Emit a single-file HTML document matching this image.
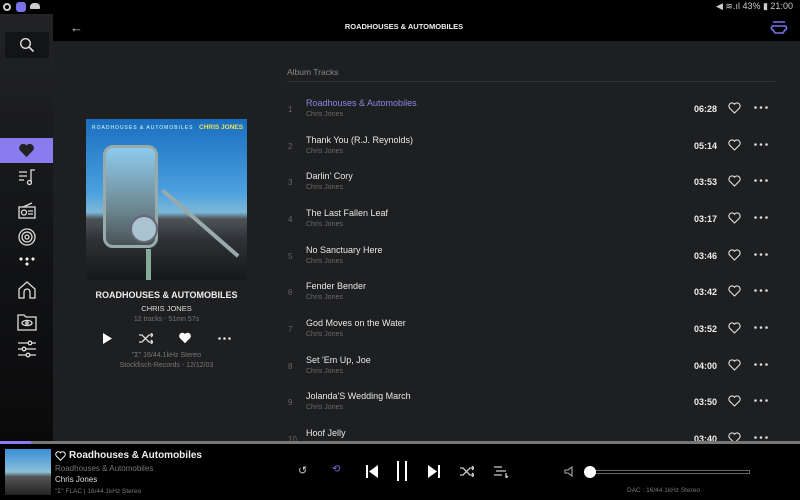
<!DOCTYPE html>
<html><head><meta charset="utf-8"><style>
*{margin:0;padding:0;box-sizing:border-box}
body{width:800px;height:500px;overflow:hidden;background:#1e1f21;font-family:"Liberation Sans",sans-serif;position:relative;color:#fff}
.abs{position:absolute}
.status{left:0;top:0;width:800px;height:14px;background:#000}
.side{left:0;top:14px;width:53px;height:430px;background:linear-gradient(#222325,#111214 60%,#0a0a0b)}
.topbar{left:53px;top:14px;width:747px;height:27px;background:#000}
.row{position:absolute;left:285px;width:490px;height:36px}
.num{position:absolute;left:3px;top:7px;font-size:8px;color:#666}
.tt{position:absolute;left:21px;top:0;font-size:9px;color:#e8e8e8}
.ar{position:absolute;left:21px;top:13px;font-size:7px;color:#6a6a6a}
.tm{position:absolute;left:409px;top:6px;font-size:9px;color:#eee;font-weight:bold}
.hr{position:absolute;left:443px;top:4px}
.dots{position:absolute;left:469px;top:8px}
svg{display:block}
</style></head><body>
<div class="abs status"></div>
<div class="abs" style="left:3px;top:3px;width:8px;height:8px;border-radius:50%;border:2px solid #ccc"></div>
<div class="abs" style="left:16px;top:2px;width:10px;height:10px;border-radius:3px;background:#7a72e8"></div>
<div class="abs" style="left:30px;top:3px;width:10px;height:6px;border-radius:4px 4px 1px 1px;background:#ccc"></div>
<div class="abs" style="left:716px;top:1px;font-size:9px;color:#ccc">◀ ≋.ıl 43% ▮ 21:00</div>
<div class="abs side"></div>
<div class="abs" style="left:5px;top:32px;width:44px;height:26px;background:#131416;border-radius:2px"></div>
<svg class="abs" style="left:19px;top:37px" width="16" height="16" viewBox="0 0 16 16"><circle cx="6.5" cy="6.5" r="4.8" fill="none" stroke="#ddd" stroke-width="1.4"/><path d="M10 10l4.5 4.5" stroke="#ddd" stroke-width="1.6"/></svg>
<div class="abs topbar"></div>
<div class="abs" style="left:70px;top:20px;font-size:13px;color:#ccc">←</div>
<div class="abs" style="left:0;top:22px;width:808px;text-align:center;font-size:7.5px;font-weight:bold;color:#eee">ROADHOUSES &amp; AUTOMOBILES</div>
<svg class="abs" style="left:770px;top:20px" width="18" height="16" viewBox="0 0 18 16"><path d="M3 2h12M4 6h10a2 2 0 0 1 1 4l-2 3H5L3 10a2 2 0 0 1 1-4" fill="none" stroke="#7a72e8" stroke-width="1.6"/></svg>
<div class="abs" style="left:0;top:138px;width:53px;height:25px;background:#8a7cf0"></div>
<svg class="abs" style="left:18px;top:143px" width="17" height="15" viewBox="0 0 17 15"><path d="M8.5 14L2 7.5A3.8 3.8 0 0 1 8.5 2.5A3.8 3.8 0 0 1 15 7.5Z" fill="#222"/></svg>
<svg class="abs" style="left:17px;top:167px" width="20" height="20" viewBox="0 0 20 20" fill="none" stroke="#ddd" stroke-width="1.3"><path d="M2 5h8M2 9h8M2 13h5"/><path d="M14 15V3h4"/><circle cx="12.5" cy="15.5" r="2"/></svg>
<svg class="abs" style="left:17px;top:202px" width="20" height="18" viewBox="0 0 20 18" fill="none" stroke="#ddd" stroke-width="1.3"><rect x="2" y="5" width="16" height="11"/><circle cx="7" cy="10.5" r="2.5"/><path d="M11 9h5M11 12h5M6 5l9-4"/></svg>
<svg class="abs" style="left:17px;top:227px" width="20" height="20" viewBox="0 0 20 20" fill="none" stroke="#ddd" stroke-width="1.3"><circle cx="10" cy="10" r="8"/><circle cx="10" cy="10" r="5"/><circle cx="10" cy="10" r="2"/></svg>
<svg class="abs" style="left:18px;top:256px" width="18" height="14" viewBox="0 0 18 14" fill="#eee"><path d="M1 3l2-2 2 2-2 2zM7 3l2-2 2 2-2 2zM13 3l2-2 2 2-2 2zM7 8l2-2 2 2-2 2z"/></svg>
<svg class="abs" style="left:17px;top:280px" width="20" height="20" viewBox="0 0 20 20" fill="none" stroke="#ddd" stroke-width="1.3"><path d="M2 18V9l8-7 8 7v9h-5v-6a3 3 0 0 0-6 0v6z"/></svg>
<svg class="abs" style="left:17px;top:313px" width="20" height="18" viewBox="0 0 20 18" fill="none" stroke="#ddd" stroke-width="1.3"><path d="M1 2h6l2 2h10v13H1z"/><ellipse cx="10" cy="10" rx="5" ry="2.6"/><circle cx="10" cy="10" r="1.2"/></svg>
<svg class="abs" style="left:17px;top:340px" width="20" height="18" viewBox="0 0 20 18" fill="none" stroke="#ddd" stroke-width="1.3"><path d="M1 3h18M1 9h18M1 15h18"/><circle cx="13" cy="3" r="1.8" fill="#111"/><circle cx="7" cy="9" r="1.8" fill="#111"/><circle cx="11" cy="15" r="1.8" fill="#111"/></svg>

<div class="abs" style="left:86px;top:119px;width:161px;height:161px;background:linear-gradient(#1a6ec0 0%,#4aa0de 45%,#7db8d8 58%,#4d5458 62%,#2e3236 75%,#16181a 100%);overflow:hidden">
<div class="abs" style="left:6px;top:6px;font-size:5px;color:#dfe;letter-spacing:1px">ROADHOUSES &amp; AUTOMOBILES</div>
<div class="abs" style="left:113px;top:5px;font-size:6.5px;color:#e7e25a;font-weight:bold">CHRIS JONES</div>
<div class="abs" style="left:17px;top:26px;width:55px;height:103px;border:3px solid #9aa;border-radius:10px;background:linear-gradient(#8dcbef,#6f8b95 60%,#4a5356)"></div>
<div class="abs" style="left:44px;top:96px;width:28px;height:28px;border-radius:50%;background:#a9c4d0;border:2px solid #667"></div>
<div class="abs" style="left:78px;top:70px;width:100px;height:4px;background:#9aa;transform:rotate(41deg);transform-origin:0 0"></div>
<div class="abs" style="left:60px;top:130px;width:5px;height:32px;background:#8a9"></div>
</div>
<div class="abs" style="left:86px;top:290px;width:161px;text-align:center;font-size:9px;font-weight:bold;color:#eee">ROADHOUSES &amp; AUTOMOBILES</div>
<div class="abs" style="left:86px;top:304px;width:161px;text-align:center;font-size:7.5px;color:#ddd">CHRIS JONES</div>
<div class="abs" style="left:86px;top:316px;width:161px;text-align:center;font-size:7px;color:#777">12 tracks - 51mn 57s</div>
<svg class="abs" style="left:102px;top:333px" width="10" height="11"><path d="M1 0l9 5.5L1 11z" fill="#fff"/></svg>
<svg class="abs" style="left:139px;top:333px" width="14" height="11" fill="none" stroke="#ddd" stroke-width="1.3"><path d="M0 2h3l7 7h4M0 9h3l7-7h4M12 0l2 2-2 2M12 7l2 2-2 2"/></svg>
<svg class="abs" style="left:178px;top:332px" width="14" height="12" viewBox="0 0 17 15"><path d="M8.5 14L2 7.5A3.8 3.8 0 0 1 8.5 2.5A3.8 3.8 0 0 1 15 7.5Z" fill="#fff"/></svg>
<svg class="abs" style="left:218px;top:337px" width="13" height="3" fill="#ddd"><circle cx="1.5" cy="1.5" r="1.3"/><circle cx="6.5" cy="1.5" r="1.3"/><circle cx="11.5" cy="1.5" r="1.3"/></svg>
<div class="abs" style="left:86px;top:352px;width:161px;text-align:center;font-size:7px;color:#777">"Σ" 16/44.1kHz Stereo</div>
<div class="abs" style="left:86px;top:362px;width:161px;text-align:center;font-size:7px;color:#777">Stockfisch-Records - 12/12/03</div>

<div class="abs" style="left:287px;top:67px;font-size:8.5px;color:#888">Album Tracks</div>
<div class="abs" style="left:287px;top:81px;width:488px;height:1px;background:#333"></div>

<svg width="0" height="0" style="position:absolute"><defs><symbol id="h" viewBox="0 0 17 15"><path d="M8.5 14L2 7.5A3.8 3.8 0 0 1 8.5 2.5A3.8 3.8 0 0 1 15 7.5Z" fill="none" stroke="#ddd" stroke-width="1.5"/></symbol><symbol id="d" viewBox="0 0 14 3"><circle cx="1.5" cy="1.5" r="1.3" fill="#ddd"/><circle cx="7" cy="1.5" r="1.3" fill="#ddd"/><circle cx="12.5" cy="1.5" r="1.3" fill="#ddd"/></symbol></defs></svg>

<div class="row" style="top:98px"><span class="num">1</span><span class="tt" style="color:#8d86e6">Roadhouses &amp; Automobiles</span><span class="ar">Chris Jones</span><span class="tm">06:28</span><svg class="hr" width="13" height="12"><use href="#h"/></svg><svg class="dots" width="14" height="3"><use href="#d"/></svg></div>
<div class="row" style="top:135px"><span class="num">2</span><span class="tt">Thank You (R.J. Reynolds)</span><span class="ar">Chris Jones</span><span class="tm">05:14</span><svg class="hr" width="13" height="12"><use href="#h"/></svg><svg class="dots" width="14" height="3"><use href="#d"/></svg></div>
<div class="row" style="top:171px"><span class="num">3</span><span class="tt">Darlin' Cory</span><span class="ar">Chris Jones</span><span class="tm">03:53</span><svg class="hr" width="13" height="12"><use href="#h"/></svg><svg class="dots" width="14" height="3"><use href="#d"/></svg></div>
<div class="row" style="top:208px"><span class="num">4</span><span class="tt">The Last Fallen Leaf</span><span class="ar">Chris Jones</span><span class="tm">03:17</span><svg class="hr" width="13" height="12"><use href="#h"/></svg><svg class="dots" width="14" height="3"><use href="#d"/></svg></div>
<div class="row" style="top:245px"><span class="num">5</span><span class="tt">No Sanctuary Here</span><span class="ar">Chris Jones</span><span class="tm">03:46</span><svg class="hr" width="13" height="12"><use href="#h"/></svg><svg class="dots" width="14" height="3"><use href="#d"/></svg></div>
<div class="row" style="top:281px"><span class="num">6</span><span class="tt">Fender Bender</span><span class="ar">Chris Jones</span><span class="tm">03:42</span><svg class="hr" width="13" height="12"><use href="#h"/></svg><svg class="dots" width="14" height="3"><use href="#d"/></svg></div>
<div class="row" style="top:318px"><span class="num">7</span><span class="tt">God Moves on the Water</span><span class="ar">Chris Jones</span><span class="tm">03:52</span><svg class="hr" width="13" height="12"><use href="#h"/></svg><svg class="dots" width="14" height="3"><use href="#d"/></svg></div>
<div class="row" style="top:355px"><span class="num">8</span><span class="tt">Set 'Em Up, Joe</span><span class="ar">Chris Jones</span><span class="tm">04:00</span><svg class="hr" width="13" height="12"><use href="#h"/></svg><svg class="dots" width="14" height="3"><use href="#d"/></svg></div>
<div class="row" style="top:391px"><span class="num">9</span><span class="tt">Jolanda'S Wedding March</span><span class="ar">Chris Jones</span><span class="tm">03:50</span><svg class="hr" width="13" height="12"><use href="#h"/></svg><svg class="dots" width="14" height="3"><use href="#d"/></svg></div>
<div class="row" style="top:428px"><span class="num">10</span><span class="tt">Hoof Jelly</span><span class="tm">03:40</span><svg class="hr" width="13" height="12"><use href="#h"/></svg><svg class="dots" width="14" height="3"><use href="#d"/></svg></div>

<div class="abs" style="left:0;top:441px;width:800px;height:3px;background:#777"></div>
<div class="abs" style="left:0;top:441px;width:31px;height:3px;background:#8a7cf0"></div>
<div class="abs" style="left:0;top:444px;width:800px;height:56px;background:#000"></div>
<div class="abs" style="left:5px;top:449px;width:46px;height:46px;background:linear-gradient(#3a8fd6,#8cbfd8 50%,#555 60%,#222)"></div>
<svg class="abs" style="left:55px;top:451px" width="11" height="10" viewBox="0 0 17 15"><path d="M8.5 14L2 7.5A3.8 3.8 0 0 1 8.5 2.5A3.8 3.8 0 0 1 15 7.5Z" fill="none" stroke="#eee" stroke-width="1.6"/></svg>
<div class="abs" style="left:69px;top:450px;font-size:10px;font-weight:bold;color:#eee">Roadhouses &amp; Automobiles</div>
<div class="abs" style="left:55px;top:464px;font-size:8px;color:#777">Roadhouses &amp; Automobiles</div>
<div class="abs" style="left:55px;top:475px;font-size:8px;color:#ddd">Chris Jones</div>
<div class="abs" style="left:55px;top:488px;font-size:6.5px;color:#777">"Σ" FLAC | 16/44.1kHz Stereo</div>
<div class="abs" style="left:298px;top:464px;font-size:11px;color:#ccc">↺</div>
<div class="abs" style="left:332px;top:464px;font-size:10px;color:#7a72e8">⟲</div>
<svg class="abs" style="left:366px;top:465px" width="12" height="13"><rect x="0" y="0" width="2" height="13" fill="#fff"/><path d="M12 0L3 6.5 12 13z" fill="#fff"/></svg>
<div class="abs" style="left:397px;top:461px;width:2px;height:20px;background:#fff"></div>
<div class="abs" style="left:405px;top:461px;width:2px;height:20px;background:#fff"></div>
<svg class="abs" style="left:428px;top:465px" width="12" height="13"><path d="M0 0l9 6.5L0 13z" fill="#fff"/><rect x="10" y="0" width="2" height="13" fill="#fff"/></svg>
<svg class="abs" style="left:460px;top:466px" width="14" height="11" fill="none" stroke="#ccc" stroke-width="1.3"><path d="M0 2h3l7 7h4M0 9h3l7-7h4M12 0l2 2-2 2M12 7l2 2-2 2"/></svg>
<svg class="abs" style="left:493px;top:465px" width="16" height="13" fill="none" stroke="#ccc" stroke-width="1.3"><path d="M1 2h8M3 6h10M1 10h8M13 8v5l2-2"/></svg>
<svg class="abs" style="left:564px;top:466px" width="10" height="11" fill="none" stroke="#aaa" stroke-width="1.1"><path d="M1 4h3l4-3v9L4 7H1z"/></svg>
<div class="abs" style="left:590px;top:470px;width:160px;height:4px;border:1px solid #666"></div>
<div class="abs" style="left:584px;top:466px;width:12px;height:12px;border-radius:50%;background:#fff"></div>
<div class="abs" style="left:627px;top:487px;font-size:6.5px;color:#777">DAC : 16/44.1kHz Stereo</div>
</body></html>
